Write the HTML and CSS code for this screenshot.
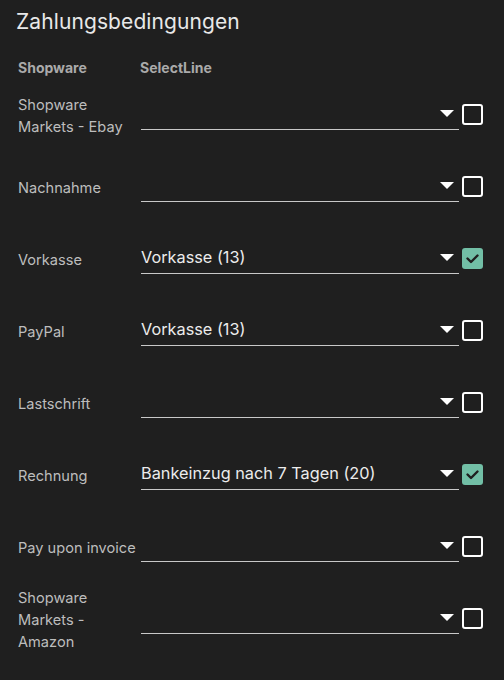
FILE: index.html
```html
<!DOCTYPE html>
<html lang="de">
<head>
<meta charset="utf-8">
<link rel="stylesheet" href="styles.css">
</head>
<body>
<div class="panel">
  <h1 class="title">Zahlungsbedingungen</h1>
  <div class="head">
    <span class="head-col">Shopware</span>
    <span class="head-col">SelectLine</span>
  </div>
  <div class="rows">
    <div class="row">
      <div class="label">Shopware<br>Markets - Ebay</div>
      <div class="select"><span class="value"></span><span class="arrow"></span></div>
      <span class="check"></span>
    </div>
    <div class="row">
      <div class="label">Nachnahme</div>
      <div class="select"><span class="value"></span><span class="arrow"></span></div>
      <span class="check"></span>
    </div>
    <div class="row">
      <div class="label">Vorkasse</div>
      <div class="select"><span class="value">Vorkasse (13)</span><span class="arrow"></span></div>
      <span class="check checked"><svg viewBox="0 0 21 21" width="21" height="21"><path d="M5.5 10.5 L9 14 L15.5 7.5" fill="none" stroke="#1f1f1f" stroke-width="2.4" stroke-linecap="round" stroke-linejoin="round"/></svg></span>
    </div>
    <div class="row">
      <div class="label">PayPal</div>
      <div class="select"><span class="value">Vorkasse (13)</span><span class="arrow"></span></div>
      <span class="check"></span>
    </div>
    <div class="row">
      <div class="label">Lastschrift</div>
      <div class="select"><span class="value"></span><span class="arrow"></span></div>
      <span class="check"></span>
    </div>
    <div class="row">
      <div class="label">Rechnung</div>
      <div class="select"><span class="value">Bankeinzug nach 7 Tagen (20)</span><span class="arrow"></span></div>
      <span class="check checked"><svg viewBox="0 0 21 21" width="21" height="21"><path d="M5.5 10.5 L9 14 L15.5 7.5" fill="none" stroke="#1f1f1f" stroke-width="2.4" stroke-linecap="round" stroke-linejoin="round"/></svg></span>
    </div>
    <div class="row">
      <div class="label nowrap">Pay upon invoice</div>
      <div class="select"><span class="value"></span><span class="arrow"></span></div>
      <span class="check"></span>
    </div>
    <div class="row">
      <div class="label">Shopware<br>Markets -<br>Amazon</div>
      <div class="select"><span class="value"></span><span class="arrow"></span></div>
      <span class="check"></span>
    </div>
  </div>
</div>
</body>
</html>
```
FILE: styles.css
```css
html, body {
  margin: 0;
  padding: 0;
  background: #1f1f1f;
}
body {
  font-family: "Inter", "Liberation Sans", sans-serif;
  width: 504px;
  height: 680px;
  overflow: hidden;
}
.panel {
  padding: 0 21px 0 18px;
}
.title {
  margin: 0 0 0 -2px;
  padding-top: 8px;
  height: 30px;
  font-size: 21px;
  font-weight: 400;
  line-height: 28px;
  color: #e8e8e8;
  letter-spacing: 0.1px;
}
.head {
  display: flex;
  height: 22px;
  margin-top: 18px;
  align-items: center;
  font-size: 14px;
  font-weight: 700;
  color: #aaaaaa;
}
.head-col:first-child {
  width: 122px;
}
.rows {
  margin-top: 2px;
}
.row {
  display: flex;
  align-items: center;
  height: 72px;
}
.label {
  width: 123px;
  font-size: 14.6px;
  line-height: 22px;
  color: #bdbdbd;
}
.nowrap {
  white-space: nowrap;
}
.select {
  width: 318px;
  height: 23px;
  padding-bottom: 4px;
  border-bottom: 1px solid #c8c8c8;
  display: flex;
  align-items: center;
  margin-bottom: 1px;
}
.value {
  flex: 1;
  font-size: 16.3px;
  color: #ececec;
}
.arrow {
  width: 0;
  height: 0;
  border-left: 7.5px solid transparent;
  border-right: 7.5px solid transparent;
  border-top: 7px solid #ffffff;
  margin-right: 5px;
}
.check {
  box-sizing: border-box;
  width: 21px;
  height: 21px;
  margin-left: 3px;
  margin-bottom: 4px;
  border: 2px solid #ffffff;
  border-radius: 3px;
  display: flex;
}
.check.checked {
  border: none;
  background: #72bfa6;
}
```
